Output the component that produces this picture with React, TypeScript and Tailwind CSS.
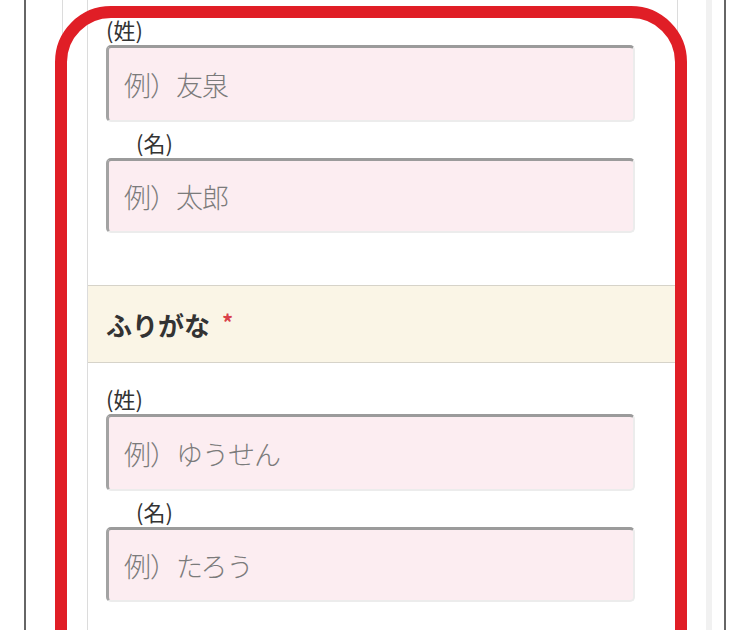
import React from "react";

type FieldProps = { label: string; placeholder: string; indent?: boolean; h: string };

function Field({ label, placeholder, indent, h }: FieldProps) {
	return (
		<div>
			<div
				className={
					indent
						? "pl-[30px] text-[22px] leading-[24px] text-[#333]"
						: "text-[22px] leading-[24px] text-[#333]"
				}
			>
				{label}
			</div>
			<input
				readOnly
				placeholder={placeholder}
				className={`mt-1 block w-[529px] ${h} rounded-[5px] bg-[#fcedf1] border-t-[3px] border-l-[3px] border-r-2 border-b-2 border-t-[#9b9b9b] border-l-[#a3a3a3] border-r-[#ececec] border-b-[#ececec] pl-[15px] text-[27px] font-light tracking-[-1px] outline-none placeholder:text-[#7b7b7b]`}
			/>
		</div>
	);
}

export default function App() {
	return (
		<div className="relative h-[630px] w-[750px] overflow-hidden bg-white font-['Noto_Sans_CJK_JP','Liberation_Sans',sans-serif]">
			<div className="mx-[24px] h-full border-x-2 border-[#666] bg-white pl-[36px] pr-[12px]">
				<div className="h-full border-l border-r-[6px] border-l-[#dcdcdc] border-r-[#f1f1f1] pl-[24px] pr-[28px]">
					<div className="h-full border-x border-[#dcdcdc]">
						<div className="px-[18px] pt-[17px]">
							<Field label="(姓)" placeholder="例）友泉" h="h-[77px]" />
							<div className="mt-2">
								<Field label="(名)" placeholder="例）太郎" indent h="h-[75px]" />
							</div>
						</div>
						<div className="mt-[52px] flex h-[78px] items-center gap-[12px] border-y border-[#d6d3c9] bg-[#faf5e6] px-[18px]">
							<span className="text-[26px] font-bold text-[#333]">ふりがな</span>
							<span className="-mt-[6px] text-[22px] font-bold text-[#d9414a]">*</span>
						</div>
						<div className="px-[18px] pt-[23px]">
							<Field label="(姓)" placeholder="例）ゆうせん" h="h-[77px]" />
							<div className="mt-2">
								<Field label="(名)" placeholder="例）たろう" indent h="h-[75px]" />
							</div>
						</div>
					</div>
				</div>
			</div>
			<div className="pointer-events-none absolute left-[55px] top-[6px] h-[700px] w-[632px] rounded-[56px] border-[12px] border-[#e01e26]" />
		</div>
	);
}
